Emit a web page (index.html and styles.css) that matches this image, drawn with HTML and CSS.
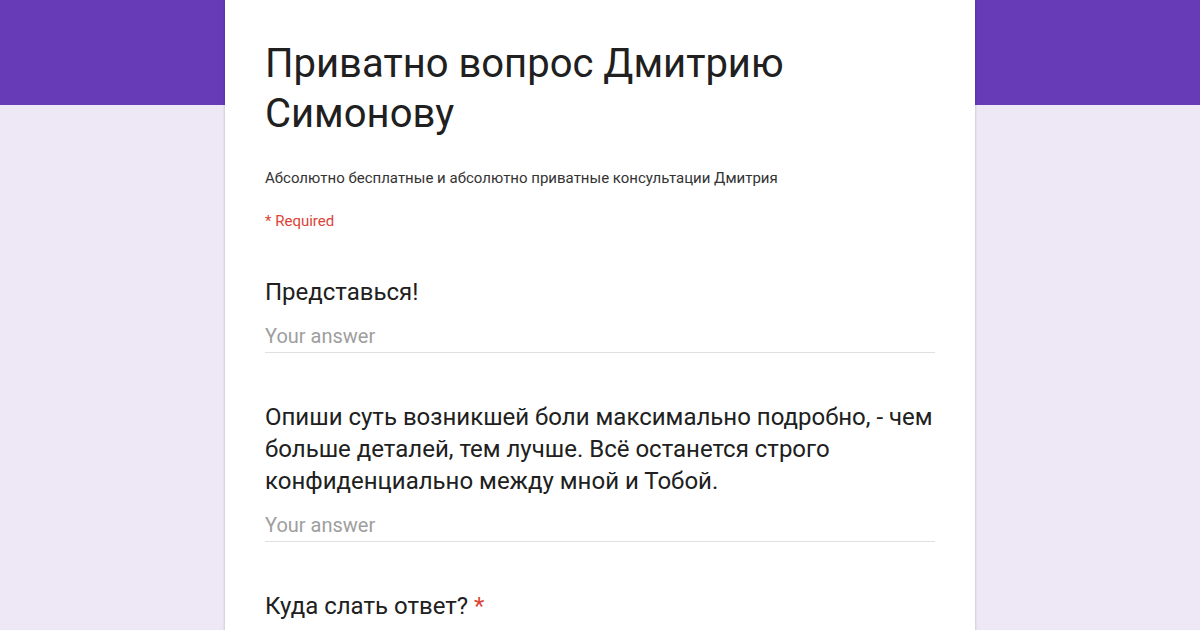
FILE: index.html
```html
<!DOCTYPE html>
<html>
<head>
    <title>Приватно вопрос Дмитрию Симонову</title>
    <link rel="stylesheet" href="styles.css">
</head>
<body>
    <div class="header-bar"></div>
    <div class="page">
        <form class="form-card" action="#" method="POST">
            <h1 class="form-title">Приватно вопрос Дмитрию Симонову</h1>
            <div class="form-desc">Абсолютно бесплатные и абсолютно приватные консультации Дмитрия</div>
            <div class="required-note">* Required</div>

            <!-- Questions -->
            <div class="question">
                <label class="question-title" for="name">Представься!</label>
                <input type="text" class="answer" id="name" name="name" placeholder="Your answer">
            </div>
            <div class="question">
                <label class="question-title" for="pain">Опиши суть возникшей боли максимально подробно, - чем больше деталей, тем лучше. Всё останется строго конфиденциально между мной и Тобой.</label>
                <input type="text" class="answer" id="pain" name="pain" placeholder="Your answer">
            </div>
            <div class="question">
                <label class="question-title" for="contact">Куда слать ответ? <span class="star">*</span></label>
                <input type="text" class="answer" id="contact" name="contact" placeholder="Your answer" required>
            </div>
        </form>
    </div>
</body>
</html>
```

FILE: styles.css
```css
body {
    font-family: Roboto, "Noto Sans", Arial, sans-serif;
    background-color: #ede7f6;
    margin: 0;
    padding: 0;
}

.header-bar {
    position: absolute;
    top: 0;
    left: 0;
    right: 0;
    height: 105px;
    background-color: #673ab7;
}

.page {
    position: relative;
    display: flex;
    justify-content: center;
}

.form-card {
    width: 750px;
    box-sizing: border-box;
    background-color: #fff;
    padding: 39px 40px 40px;
    box-shadow: 0 0 3px rgba(0, 0, 0, 0.2);
    min-height: 700px;
}

.form-title {
    margin: 0;
    font-size: 40px;
    line-height: 50px;
    font-weight: 400;
    color: #202020;
    max-width: 560px;
}

.form-desc {
    margin-top: 29px;
    font-size: 15px;
    line-height: 20px;
    color: #333;
}

.required-note {
    margin-top: 23px;
    font-size: 15px;
    line-height: 20px;
    color: #db4437;
}

.question {
    margin-top: 45px;
}

.question + .question {
    margin-top: 48px;
}

.question-title {
    display: block;
    margin-right: -20px;
    font-size: 24px;
    line-height: 32px;
    color: #202020;
}

.star {
    color: #db4437;
}

.answer {
    display: block;
    width: 100%;
    box-sizing: border-box;
    margin-top: 14px;
    padding: 0 0 2px;
    height: 31px;
    border: none;
    border-bottom: 1px solid #e0e0e0;
    font-family: Roboto, Arial, sans-serif;
    font-size: 20px;
    line-height: 28px;
    color: #202020;
    outline: none;
}

.answer::placeholder {
    color: #9e9e9e;
}
```
